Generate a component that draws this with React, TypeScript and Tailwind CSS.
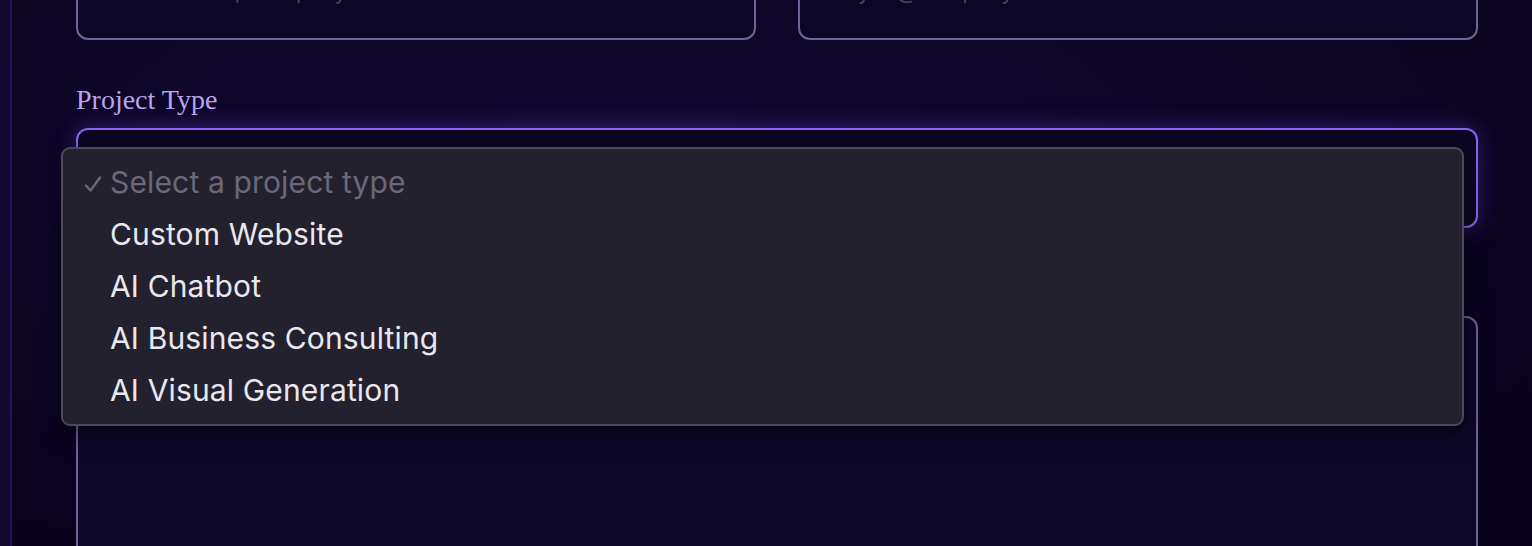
const options = [
  "Custom Website",
  "AI Chatbot",
  "AI Business Consulting",
  "AI Visual Generation",
];

function App() {
  return (
    <div className="relative h-[546px] w-[1532px] overflow-hidden bg-[#0a0420] flex">
      {/* left strip */}
      <div className="w-[10px] shrink-0 bg-[#120a33]" />
      <div className="w-[2px] shrink-0 bg-[#24135a]" />

      <div className="relative flex-1 bg-[radial-gradient(ellipse_at_40%_30%,#110830_0%,#0c0524_55%,#08021a_100%)] pl-[64px] pr-[54px]">
        {/* top inputs */}
        <div className="grid grid-cols-2 gap-[42px] -mt-[60px]">
          <div className="h-[100px] rounded-[12px] border-2 border-[#6f6296] bg-[#0d0727] overflow-hidden pt-[33px] pl-[58px]">
            <span className="font-['Inter',sans-serif] text-[22px] text-[#4a4560]">Jane Doe, Company</span>
          </div>
          <div className="h-[100px] rounded-[12px] border-2 border-[#6f6296] bg-[#0d0727] overflow-hidden pt-[33px] pl-[58px]">
            <span className="font-['Inter',sans-serif] text-[22px] text-[#4a4560]">you@company.com</span>
          </div>
        </div>

        {/* project type */}
        <div className="mt-[44px] font-['Liberation_Serif',serif] text-[28px] leading-[32px] text-[#b7a5ef]">
          Project Type
        </div>
        <div className="mt-[12px] h-[100px] rounded-[12px] border-2 border-[#8a62f2] bg-[#0b0622] shadow-[0_0_24px_rgba(124,77,255,0.35)]" />

        {/* message */}
        <div className="mt-[88px] h-[260px] rounded-[12px] border-2 border-[#6f6296] bg-[#0d0727]" />

        {/* open native-style dropdown */}
        <div className="absolute left-[49px] top-[147px] w-[1403px] h-[279px] rounded-[9px] border-2 border-[#4c4a55] bg-[#24212f] shadow-[0_8px_24px_rgba(0,0,0,0.5)] pt-[7px] font-['Inter',sans-serif] text-[30px] tracking-[0.005em] leading-[52px]">
          <div className="flex items-center text-[#6b6878]">
            <span className="w-[47px] flex justify-end pr-[8px] pt-[3px]">
              <svg width="18" height="18" viewBox="0 0 18 18" fill="none" stroke="currentColor" strokeWidth="2.4" strokeLinecap="round" strokeLinejoin="round">
                <path d="M2 10.5 6.5 15.5 16 2.5" />
              </svg>
            </span>
            Select a project type
          </div>
          {options.map((o) => (
            <div key={o} className="pl-[47px] text-[#e9e8ee]">
              {o}
            </div>
          ))}
        </div>
      </div>
    </div>
  );
}

export default App;
